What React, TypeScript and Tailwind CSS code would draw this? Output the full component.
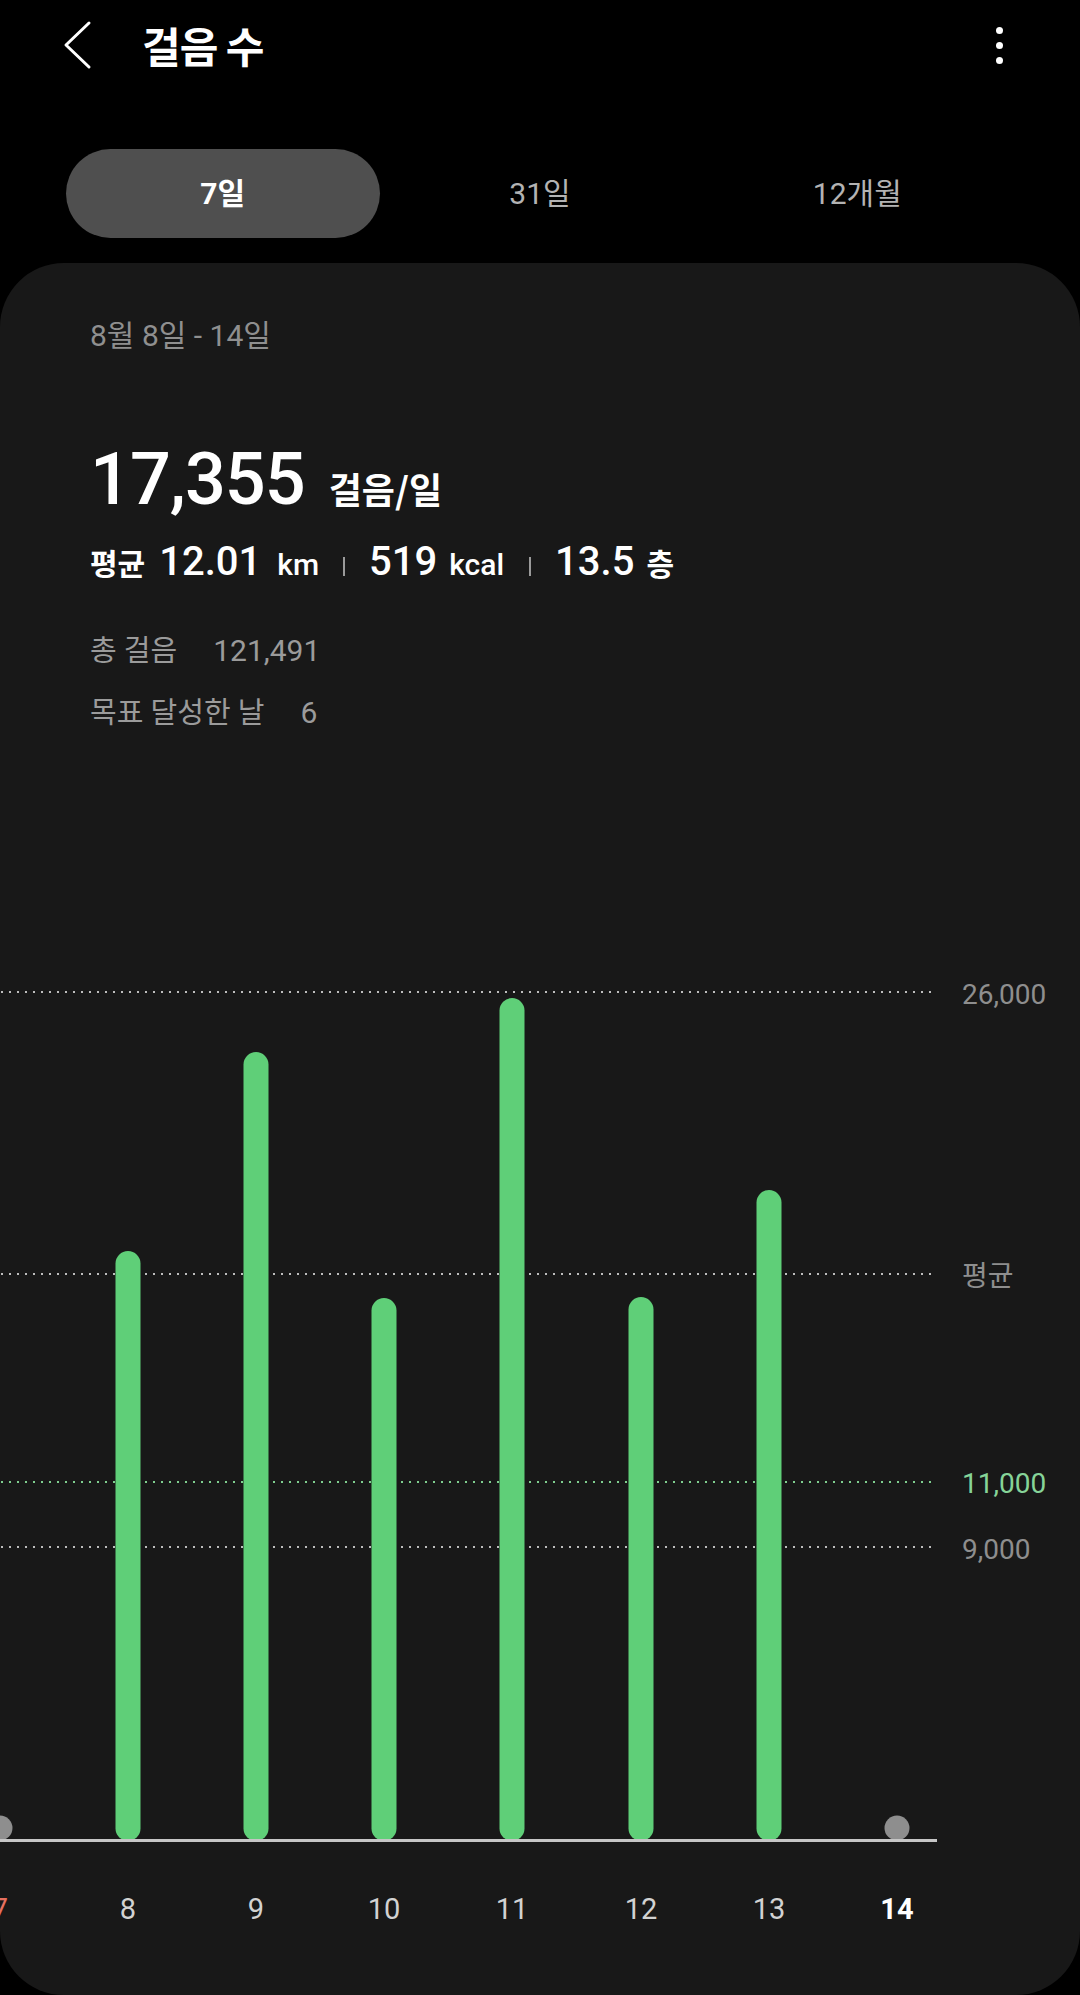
import React from 'react';

const bars = [
  { day: 8, x: 128, top: 1251 },
  { day: 9, x: 256, top: 1052 },
  { day: 10, x: 384, top: 1298 },
  { day: 11, x: 512, top: 998 },
  { day: 12, x: 641, top: 1297 },
  { day: 13, x: 769, top: 1190 },
];

const grid = [
  { y: 992, label: '26,000', color: '#bdbdbd', text: '#8e8e8e', base: 1004 },
  { y: 1274, label: '평균', color: '#bdbdbd', text: '#8e8e8e', base: 1286 },
  { y: 1482, label: '11,000', color: '#7fcf8f', text: '#86d498', base: 1493 },
  { y: 1547, label: '9,000', color: '#bdbdbd', text: '#8e8e8e', base: 1559 },
];

const BASE = 1840;

function Chart() {
  return (
    <svg width="1080" height="990" viewBox="0 960 1080 990" className="block">
      {grid.map((g) => (
        <g key={g.label}>
          <line x1="1" y1={g.y} x2="931" y2={g.y} stroke={g.color} strokeWidth="2" strokeDasharray="2 6" />
          <text x="962" y={g.base} fill={g.text} fontSize="28" className="font-['Roboto','Noto_Sans_CJK_KR',sans-serif]">
            {g.label}
          </text>
        </g>
      ))}
      {bars.map((b) => (
        <rect key={b.day} x={b.x - 12.5} y={b.top} width="25" height={BASE + 1 - b.top} rx="12.5" fill="#5fcf78" />
      ))}
      <circle cx="0" cy="1828" r="12.5" fill="#8e8e8e" />
      <circle cx="897" cy="1828" r="12.5" fill="#8e8e8e" />
      <rect x="0" y="1839" width="937" height="3" fill="#c6c6c6" />
      <text x="0" y="1919" fill="#e5705f" fontSize="29" textAnchor="middle" className="font-['Roboto',sans-serif]">7</text>
      {bars.map((b) => (
        <text key={b.day} x={b.x} y="1919" fill="#d2d2d2" fontSize="29" textAnchor="middle" className="font-['Roboto',sans-serif]">
          {b.day}
        </text>
      ))}
      <text x="897" y="1919" fill="#ffffff" fontSize="29" fontWeight="700" textAnchor="middle" className="font-['Roboto',sans-serif]">14</text>
    </svg>
  );
}

export default function App() {
  return (
    <div className="w-[1080px] h-[1995px] overflow-hidden bg-black text-white font-['Roboto','Noto_Sans_CJK_KR',sans-serif]">
      {/* header */}
      <div className="flex h-[90px] items-center">
        <svg width="40" height="50" viewBox="0 0 40 50" className="ml-[58px]">
          <path d="M31 3 L8 25 L31 47" fill="none" stroke="#fff" strokeWidth="3" strokeLinecap="round" strokeLinejoin="round" />
        </svg>
        <h1 className="ml-[44px] text-[42px] leading-[50px] font-bold tracking-[-1px] font-['Noto_Sans_CJK_KR',sans-serif]">걸음 수</h1>
        <div className="ml-auto mr-[77px] flex flex-col items-center gap-[8px]">
          <span className="h-[7px] w-[7px] rounded-full bg-white" />
          <span className="h-[7px] w-[7px] rounded-full bg-white" />
          <span className="h-[7px] w-[7px] rounded-full bg-white" />
        </div>
      </div>

      {/* tabs */}
      <div className="mt-[59px] grid h-[89px] grid-cols-3 px-[64px]">
        <div className="flex items-center justify-center">
          <div className="flex h-[89px] w-[314px] items-center justify-center rounded-full bg-[#4f4f4f] text-[30px] font-bold">
            7일
          </div>
        </div>
        <div className="flex items-center justify-center text-[30px] text-[#b3b3b3]">31일</div>
        <div className="flex items-center justify-center text-[30px] text-[#b3b3b3]">12개월</div>
      </div>

      {/* card */}
      <div className="mt-[25px] h-[1732px] overflow-hidden rounded-[64px] bg-[#181818]">
        <div className="px-[90px] pt-[56px]">
          <p className="text-[30px] leading-[34px] text-[#8f8f8f]">8월 8일 - 14일</p>

          <div className="mt-[87px] flex h-[80px] items-baseline">
            <span className="text-[72px] leading-[80px] font-medium tracking-[-1px]">17,355</span>
            <span className="ml-[24px] text-[36px] font-bold font-['Noto_Sans_CJK_KR',sans-serif]">걸음/일</span>
          </div>

          <div className="mt-[18px] flex h-[48px] items-baseline font-medium">
            <span className="text-[30px] font-bold font-['Noto_Sans_CJK_KR',sans-serif]">평균</span>
            <span className="ml-[14px] text-[40px] leading-[48px]">12.01</span>
            <span className="ml-[16px] text-[30px]">km</span>
            <span className="ml-[24px] inline-block h-[19px] w-[2px] self-center bg-[#9a9a9a] translate-y-[4px]" />
            <span className="ml-[24px] text-[40px] leading-[48px]">519</span>
            <span className="ml-[12px] text-[30px]">kcal</span>
            <span className="ml-[25px] inline-block h-[19px] w-[2px] self-center bg-[#9a9a9a] translate-y-[4px]" />
            <span className="ml-[24px] text-[40px] leading-[48px]">13.5</span>
            <span className="ml-[12px] text-[30px] font-bold font-['Noto_Sans_CJK_KR',sans-serif]">층</span>
          </div>

          <div className="mt-[47px] flex h-[36px] items-baseline text-[29px] leading-[36px] text-[#9b9b9b]">
            <span>총 걸음</span>
            <span className="ml-[36px] text-[30px]">121,491</span>
          </div>
          <div className="mt-[26px] flex h-[36px] items-baseline text-[29px] leading-[36px] text-[#9b9b9b]">
            <span>목표 달성한 날</span>
            <span className="ml-[36px] text-[30px]">6</span>
          </div>
        </div>

        <div className="mt-[229px]">
          <Chart />
        </div>
      </div>
    </div>
  );
}
